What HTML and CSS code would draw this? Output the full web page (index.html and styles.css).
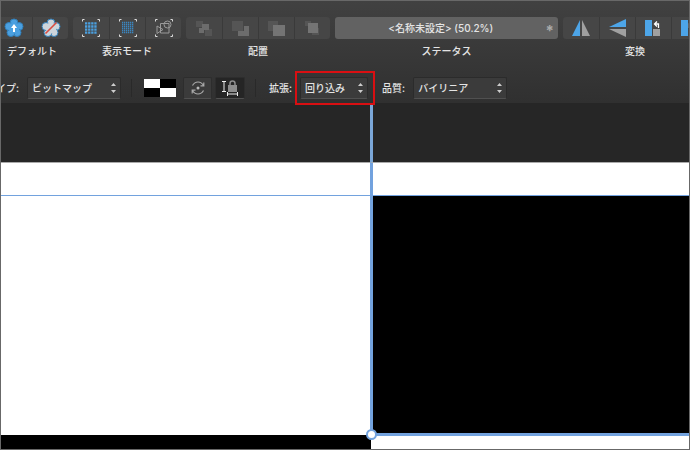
FILE: index.html
```html
<!DOCTYPE html>
<html lang="ja">
<head>
<meta charset="utf-8">
<meta name="viewport" content="width=device-width, initial-scale=1">
<title>名称未設定</title>
<link rel="stylesheet" href="styles.css">
</head>
<body>
<header class="chrome">
  <div class="toolbar">
    <section class="group">
      <div class="buttons">
        <button type="button" aria-label="デフォルトに同期"><svg width="20" height="20" viewBox="0 0 20 20"><g class="flower"><circle cx="10" cy="5" r="4"/><circle cx="15" cy="8.500" r="4"/><circle cx="13" cy="14.500" r="4"/><circle cx="7" cy="14.500" r="4"/><circle cx="5" cy="8.500" r="4"/></g><circle class="heart" cx="10" cy="10" r="5.500"/><path fill="#fff" d="M10 6l3 4h-2v4H9v-4H7z"/></svg></button>
        <button type="button" aria-label="デフォルトに戻す"><svg width="20" height="20" viewBox="0 0 20 20"><g class="flower pale"><circle cx="10" cy="5" r="4"/><circle cx="15" cy="8.500" r="4"/><circle cx="13" cy="14.500" r="4"/><circle cx="7" cy="14.500" r="4"/><circle cx="5" cy="8.500" r="4"/></g><circle class="heart pale" cx="10" cy="10" r="5.500"/><path stroke="#d94b40" stroke-width="1.600" d="M4.500 15.500L15.500 4.500"/></svg></button>
      </div>
      <h2>デフォルト</h2>
    </section>
    <section class="group">
      <div class="buttons">
        <button type="button" aria-label="ピクセル"><svg width="18" height="18" viewBox="0 0 18 18"><path class="corners" d="M.5 2.500v-2h2M15.500 .5h2v2M17.500 15.500v2h-2M2.500 17.500h-2v-2"/><path stroke="#4ba0e0" stroke-width="2.300" stroke-dasharray="2.300 .8" d="M3 4.400h12M3 7.500h12M3 10.600h12M3 13.700h12"/></svg></button>
        <button type="button" aria-label="ピクセル (Retina)"><svg width="18" height="18" viewBox="0 0 18 18"><path class="corners" d="M.5 2.500v-2h2M15.500 .5h2v2M17.500 15.500v2h-2M2.500 17.500h-2v-2"/><path stroke="#3b86c0" stroke-width="1.300" stroke-dasharray="1.300 .7" d="M3 3.500h12M3 5.500h12M3 7.500h12M3 9.500h12M3 11.500h12M3 13.500h12"/></svg></button>
        <button type="button" aria-label="アウトライン"><svg width="18" height="18" viewBox="0 0 18 18"><path class="corners" d="M.5 2.500v-2h2M15.500 .5h2v2M17.500 15.500v2h-2M2.500 17.500h-2v-2"/><g fill="none" stroke="#9a9a9a"><path d="M5.500 4.500h8.500v9.500H5.500zM2 7l6 3.500-6 4z"/><circle cx="12.500" cy="5.500" r="3.500"/></g></svg></button>
      </div>
      <h2>表示モード</h2>
    </section>
    <section class="group">
      <div class="buttons">
        <button type="button" aria-label="最背面へ移動"><svg width="18" height="18" viewBox="0 0 18 18"><path fill="#555" d="M1 2h7v6H1zM10 10h7v7h-7z"/><path fill="#6c6c6c" d="M7 5h7v6H9v3H4V9h3z"/></svg></button>
        <button type="button" aria-label="背面へ移動"><svg width="18" height="18" viewBox="0 0 18 18"><path fill="#555" d="M0 2h11v10H0z"/><path fill="#6c6c6c" d="M12 7h5v10H6v-5h6z"/></svg></button>
        <button type="button" aria-label="前面へ移動"><svg width="18" height="18" viewBox="0 0 18 18"><path fill="#555" d="M0 2h10v4H5v6H0z"/><path fill="#747474" d="M5 6h12v11H5z"/></svg></button>
        <button type="button" aria-label="最前面へ移動"><svg width="18" height="18" viewBox="0 0 18 18"><path fill="#555" d="M1 2h6v5H1zM8 9h7v7H8z"/><path fill="#747474" d="M4 4h10v10H4z"/></svg></button>
      </div>
      <h2>配置</h2>
    </section>
    <section class="group status">
      <div class="readout"><span>&lt;名称未設定&gt; (50.2%)</span><b>*</b></div>
      <h2>ステータス</h2>
    </section>
    <section class="group">
      <div class="buttons">
        <button type="button" aria-label="左右反転"><svg width="18" height="18" viewBox="0 0 18 18"><path fill="#4da5e8" d="M8 1v16H0z"/><path fill="#a0a0a0" d="M10 1v16h8z"/></svg></button>
        <button type="button" aria-label="上下反転"><svg width="18" height="18" viewBox="0 0 18 18"><path fill="#4da5e8" d="M17 0v8H0z"/><path fill="#a0a0a0" d="M17 18v-8H0z"/></svg></button>
        <button type="button" aria-label="左に90度回転"><svg width="18" height="18" viewBox="0 0 18 18"><path fill="#4da5e8" d="M0 1h7v16H0z"/><path fill="#a0a0a0" d="M8 10h7v7H8z"/><path fill="none" stroke="#fff" stroke-width="1.300" d="M13.500 9V5H10M12 2.500L9.500 5 12 7.500"/></svg></button>
        <button type="button" aria-label="右に90度回転"><svg width="18" height="18" viewBox="0 0 18 18"><path fill="#4da5e8" d="M0 1h7v16H0z"/><path fill="#a0a0a0" d="M8 10h7v7H8z"/><path fill="none" stroke="#fff" stroke-width="1.300" d="M8.500 9V5H13M11 2.500L13.500 5 11 7.500"/></svg></button>
      </div>
      <h2>変換</h2>
    </section>
  </div>

  <form class="context">
    <div class="field type">
      <label for="type">タイプ:</label>
      <span class="select"><select id="type"><option>ビットマップ</option></select><svg width="5" height="10" viewBox="0 0 5 10"><path d="M0 3l2.500-3L5 3zM0 7l2.500 3L5 7z"/></svg></span>
    </div>
    <i class="rule"></i>
    <button type="button" class="swatch" aria-label="塗りつぶし"></button>
    <button type="button" class="tool" aria-label="回転"><svg width="14" height="14" viewBox="0 0 14 14"><path fill="none" stroke="#aaa" stroke-width="1.200" d="M1.500 4.500Q3.500 1 7 1T12.500 4.500M12.800 1.500v3.300H9.500M12.500 9.500Q10.500 13 7 13T1.500 9.500M1.200 12.500V9.200H4.500"/><circle cx="7" cy="7" r="1.500" fill="#bbb"/></svg></button>
    <button type="button" class="tool locked" aria-label="縦横比を固定"><svg width="16" height="16" viewBox="0 0 16 16"><path fill="none" stroke="#eee" d="M0 1.500h4M2 1.500v10M0 11.500h4M5.500 12v4M15.500 12v4M5.500 14h10"/><path fill="#8d8d8d" d="M6 5h9v7H6z"/><path fill="none" stroke="#8d8d8d" stroke-width="1.500" d="M8 6V3.500Q8 1 10.500 1T13 3.500V6"/></svg></button>
    <i class="rule"></i>
    <div class="field">
      <label for="extend">拡張:</label>
      <span class="select narrow marked"><select id="extend"><option>回り込み</option></select><svg width="5" height="10" viewBox="0 0 5 10"><path d="M0 3l2.500-3L5 3zM0 7l2.500 3L5 7z"/></svg></span>
    </div>
    <div class="field quality">
      <label for="quality">品質:</label>
      <span class="select"><select id="quality"><option>バイリニア</option></select><svg width="5" height="10" viewBox="0 0 5 10"><path d="M0 3l2.500-3L5 3zM0 7l2.500 3L5 7z"/></svg></span>
    </div>
  </form>
</header>

<main class="canvas">
  <div class="paste"></div><div class="paste guide-top"></div>
  <div class="band"></div><div class="band guide"></div>
  <div class="paper"></div><div class="bitmap"><i class="handle"></i></div>
  <div class="ink"></div><div class="paper"></div>
</main>
</body>
</html>
```
FILE: styles.css
```css
* { box-sizing: border-box; }

body {
  margin: 0;
  min-height: 100vh;
  display: flex;
  flex-direction: column;
  border: 1px solid #686868;
  background: #262626;
  color: #e4e4e4;
  font: 500 10px/14px Inter, "Noto Sans CJK JP", sans-serif;
  overflow-x: hidden;
}

button, select {
  margin: 0;
  padding: 0;
  border: 0;
  color: inherit;
  font: inherit;
}

svg { display: block; }

.chrome {
  padding: 16px 0 3px;
  background: linear-gradient(#414141, #353535 70%, #303030);
  overflow-x: clip;
}

.toolbar {
  display: flex;
  gap: 5px;
  margin: 0 -18px 0 -5px;
}

.group h2 {
  margin: 5px 0 0;
  font: inherit;
  text-align: center;
}

.buttons {
  display: flex;
  height: 22px;
  border-radius: 3px;
  background: #464646;
  overflow: hidden;
}

.buttons button {
  display: flex;
  align-items: center;
  justify-content: center;
  width: 36px;
  background: none;
}

.buttons button + button { border-left: 1px solid #3a3a3a; }

.flower { fill: #4ba0e0; stroke: #327eb8; }
.heart { fill: #4ba0e0; }
.pale { fill: #cdd5dc; }
.corners { fill: none; stroke: #ddd; }

.status { flex: 1; }

.readout {
  display: flex;
  align-items: center;
  height: 22px;
  padding: 0 4px 0 1px;
  border-radius: 3px;
  background: #626262;
}

.readout span { flex: 1; text-align: center; }
.readout b { color: #aaa; font-size: 15px; line-height: 12px; padding-top: 5px; }

.context {
  display: flex;
  align-items: center;
  height: 24px;
  margin-top: 18px;
  white-space: nowrap;
}

.field {
  display: flex;
  align-items: center;
  gap: 8px;
}

.type { margin-left: -15px; }
.quality { margin-left: 14px; }

.select {
  position: relative;
  width: 94px;
}

.narrow { width: 68px; }

.select select {
  display: block;
  width: 100%;
  height: 22px;
  padding: 0 4px;
  appearance: none;
  border: 1px solid #2b2b2b;
  border-bottom-color: #505050;
  border-radius: 2px;
  background: #3b3b3b;
}

.select svg {
  position: absolute;
  right: 5px;
  top: 6px;
  fill: #ccc;
  pointer-events: none;
}

.marked::after {
  content: "";
  position: absolute;
  inset: -6px -7px -6px -5px;
  border: 2px solid #d90f12;
  pointer-events: none;
  z-index: 2;
}

.rule {
  width: 1px;
  height: 18px;
  margin: 0 12px 0 10px;
  background: #292929;
}

.rule + .field { margin-left: 1px; }

.swatch {
  width: 32px;
  height: 18px;
  background: conic-gradient(#000 25%, #fff 0 50%, #000 0 75%, #fff 0);
}

.tool {
  display: flex;
  align-items: center;
  justify-content: center;
  width: 29px;
  height: 22px;
  margin-left: 7px;
  border: 1px solid #2d2d2d;
  border-bottom-color: #505050;
  border-radius: 2px;
  background: #3b3b3b;
}

.locked {
  width: 30px;
  margin-left: 3px;
  background: #252525;
}

.canvas {
  flex: 1;
  display: grid;
  grid-template-columns: 370fr 318fr;
  grid-template-rows: 60px 33px 1fr 14px;
}

.paste { background: #262626; border-bottom: 1px solid #aaa; }
.guide-top { margin-left: -1px; border-left: 3px solid #7ba7d8; }
.band { background: #fff; border-bottom: 1px solid #72a2de; }
.guide { margin-left: -1px; border-left: 3px solid #72a2de; }
.paper { background: #fff; }
.ink { background: #000; }

.bitmap {
  position: relative;
  margin: 0 0 -1px -1px;
  border-left: 3px solid #72a2de;
  border-bottom: 3px solid #72a2de;
  background: #000;
  z-index: 1;
}

.handle {
  position: absolute;
  left: -7px;
  bottom: -7px;
  width: 11px;
  height: 11px;
  border: 2px solid #72a2de;
  border-radius: 50%;
  background: #fff;
}
```
